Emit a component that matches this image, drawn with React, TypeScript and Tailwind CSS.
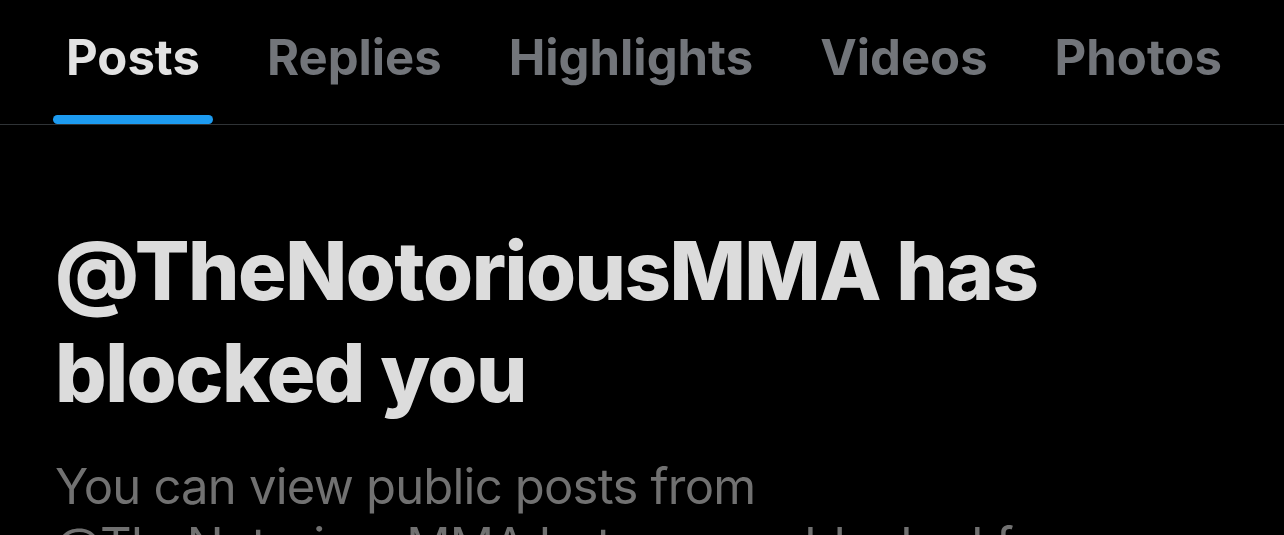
const tabs = ["Posts", "Replies", "Highlights", "Videos", "Photos"];

export default function App() {
  return (
    <div
      className="h-[535px] w-full overflow-hidden bg-black"
      style={{ fontFamily: "Inter, 'Noto Sans', sans-serif" }}
    >
      <div className="flex gap-[41px] border-b border-[#2f3336] pl-[53px] pt-[28px]">
        {tabs.map((t, i) => (
          <div key={t} className="flex flex-col items-stretch">
            <div
              className={`px-[13px] text-[49px] font-bold leading-[59px] ${
                i === 0 ? "text-[#e2e2e2]" : "text-[#72757a]"
              }`}
            >
              {t}
            </div>
            <div
              className={`mt-[28px] h-[9px] rounded-full ${
                i === 0 ? "bg-[#1d9bf0]" : "bg-transparent"
              }`}
            />
          </div>
        ))}
      </div>
      <div className="px-[55px] pt-[95px]">
        <h1 className="text-[81px] font-extrabold leading-[102px] tracking-[-1.5px] text-[#dcdcdc]">
          @TheNotoriousMMA has
          <br />
          blocked you
        </h1>
        <p className="mt-[33px] text-[49px] leading-[59px] tracking-[-0.8px] text-[#717171]">
          You can view public posts from @TheNotoriousMMA but you are blocked
          from viewing their replies
        </p>
      </div>
    </div>
  );
}
